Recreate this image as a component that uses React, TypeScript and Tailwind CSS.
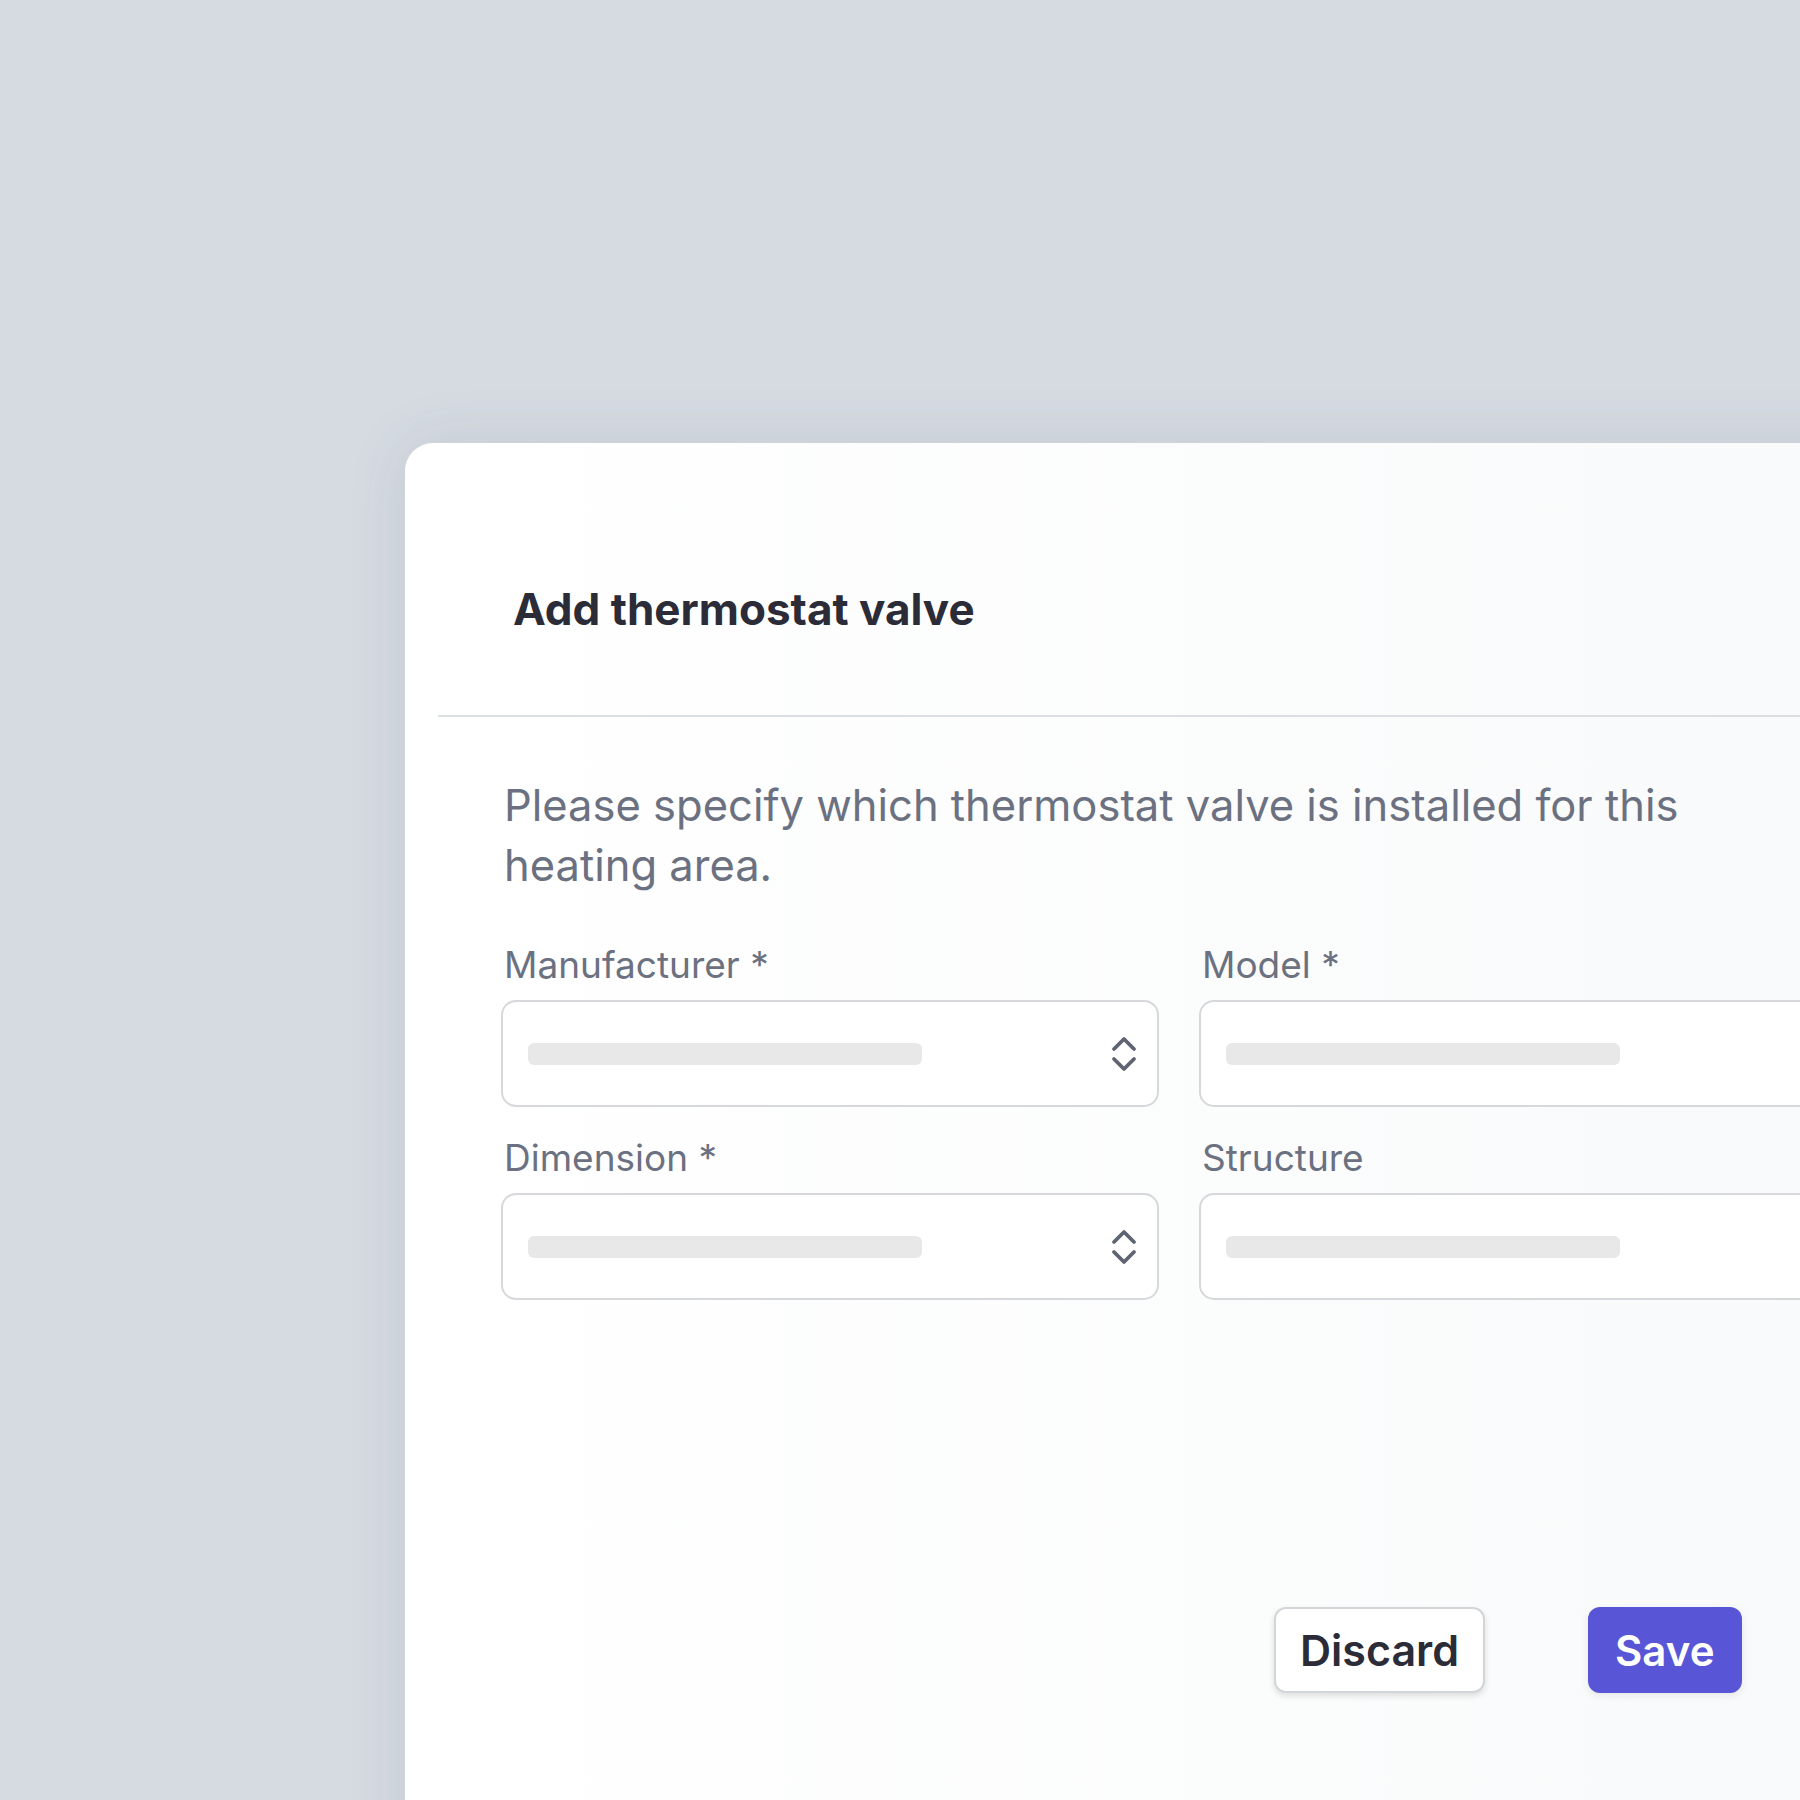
import React from "react";

type Field = {
  label: string;
  select: boolean;
};

const fields: Field[] = [
  { label: "Manufacturer *", select: true },
  { label: "Model *", select: false },
  { label: "Dimension *", select: true },
  { label: "Structure", select: false },
];

function UpDown() {
  return (
    <svg width="28" height="40" viewBox="0 0 28 40" fill="none" className="shrink-0">
      <path d="M4 15 L14 5 L24 15" stroke="#5f6472" strokeWidth="3.8" strokeLinecap="round" strokeLinejoin="round" />
      <path d="M4 25 L14 35 L24 25" stroke="#5f6472" strokeWidth="3.8" strokeLinecap="round" strokeLinejoin="round" />
    </svg>
  );
}

function FormField({ field }: { field: Field }) {
  return (
    <div className="flex flex-col gap-[13px]">
      <label className="text-[37px] leading-[44px] text-[#6b7180] pl-[3px]">{field.label}</label>
      <div className="h-[107px] rounded-[15px] border-2 border-[#d6d8db] bg-white flex items-center justify-between pl-[25px] pr-[19px]">
        <div className="h-[22px] w-[394px] rounded-[6px] bg-[#e8e8e9]" />
        {field.select && <UpDown />}
      </div>
    </div>
  );
}

export default function App() {
  return (
    <div
      className="h-[1800px] w-[1800px] overflow-hidden bg-[#d6dbe2] pt-[443px] pl-[405px]"
      style={{ fontFamily: "Inter, 'Noto Sans', sans-serif" }}
    >
      <div className="w-[1600px] h-[1500px] rounded-tl-[28px] bg-gradient-to-r from-white to-[#f8f9fa] shadow-[0_0_60px_rgba(60,70,80,0.12)]">
        <div className="pt-[140px] pb-[80px] pl-[108px]">
          <h1 className="text-[44px] leading-[52px] font-bold text-[#2b2c37]">Add thermostat valve</h1>
        </div>
        <div className="ml-[33px] h-[2px] bg-[#dcdfe2]" />
        <div className="pl-[96px] pt-[58px]">
          <p className="text-[43.5px] leading-[60px] text-[#6b7180] max-w-[1240px] pl-[3px]">
            Please specify which thermostat valve is installed for this heating area.
          </p>
          <div className="mt-[48px] grid grid-cols-[658px_658px] gap-x-[40px] gap-y-[29px]">
            {fields.map((f) => (
              <FormField key={f.label} field={f} />
            ))}
          </div>
        </div>
        <div className="flex gap-[103px] pl-[869px] pt-[307px]">
          <button className="h-[86px] px-[24px] rounded-[12px] border-2 border-[#d3d6d9] bg-white text-[43px] font-semibold text-[#2b2c37] shadow-[0_3px_6px_rgba(0,0,0,0.12)]">
            Discard
          </button>
          <button className="h-[86px] px-[27px] rounded-[12px] bg-[#5856d6] text-[42px] font-semibold text-white shadow-[0_3px_8px_rgba(0,0,0,0.08)]">
            Save
          </button>
        </div>
      </div>
    </div>
  );
}
